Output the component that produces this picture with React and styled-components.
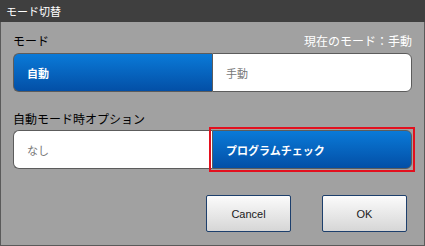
import React from 'react';
import styled, { createGlobalStyle } from 'styled-components';

const GlobalStyle = createGlobalStyle`
  html, body {
    margin: 0;
    padding: 0;
    background: #a0a0a0;
  }
  * {
    box-sizing: border-box;
  }
`;

const jp = `"Noto Sans CJK JP", "Liberation Sans", sans-serif`;

const Window = styled.div`
  width: 425px;
  height: 246px;
  display: flex;
  flex-direction: column;
  background: #a1a1a1;
  border: 1px solid #5a5a5a;
  border-top: none;
  font-family: ${jp};
`;

const TitleBar = styled.div`
  height: 22px;
  flex-shrink: 0;
  background: #3f3f3f;
  color: #fff;
  font-size: 11px;
  line-height: 22px;
  padding-left: 6px;
  margin: 0 -1px;
`;

const Content = styled.div`
  display: flex;
  flex-direction: column;
  padding: 0 12px;
`;

const LabelRow = styled.div`
  display: flex;
  justify-content: space-between;
  align-items: center;
  height: 16px;
  margin-top: ${(p) => p.$top}px;
  font-size: 12px;
  color: #000;
`;

const Current = styled.span`
  color: #fff;
`;

const Segmented = styled.div`
  display: grid;
  grid-template-columns: 199px 1fr;
  height: 39px;
  margin-top: ${(p) => p.$top}px;
`;

const Segment = styled.div`
  position: relative;
  display: flex;
  align-items: center;
  padding-left: 13px;
  font-size: 11px;
  border: 1px solid #5c5c5c;
  border-radius: ${(p) => (p.$first ? '6px 0 0 6px' : '0 6px 6px 0')};
  ${(p) => (p.$first ? 'border-right: none;' : '')}
  background: ${(p) =>
    p.$active ? 'linear-gradient(#0a7ad8, #034fa6)' : '#fff'};
  color: ${(p) => (p.$active ? '#fff' : '#777')};
  font-weight: ${(p) => (p.$active ? 700 : 400)};

  /* focus frame: square red rectangle sitting just outside the button */
  ${(p) =>
    p.$focus &&
    `
    &::after {
      content: '';
      position: absolute;
      inset: -4px;
      border: 2px solid #e3101e;
      pointer-events: none;
    }
  `}
`;

const ButtonRow = styled.div`
  display: flex;
  justify-content: flex-end;
  gap: 31px;
  margin-top: 26px;
  padding-right: 5px;
`;

const Button = styled.button`
  width: 85px;
  height: 37px;
  border: 1px solid #1d3f6c;
  border-radius: 2px;
  background: linear-gradient(#fbfbfb, #d6d6d6);
  font-family: "Liberation Sans", sans-serif;
  font-size: 11px;
  color: #1a1a1a;
  padding: 0;
`;

export default function App() {
  return (
    <>
      <GlobalStyle />
      <Window>
        <TitleBar>モード切替</TitleBar>
        <Content>
          <LabelRow $top={10}>
            <span>モード</span>
            <Current>現在のモード：手動</Current>
          </LabelRow>
          <Segmented $top={5}>
            <Segment $first $active>自動</Segment>
            <Segment>手動</Segment>
          </Segmented>
          <LabelRow $top={18}>
            <span>自動モード時オプション</span>
          </LabelRow>
          <Segmented $top={4}>
            <Segment $first>なし</Segment>
            <Segment $active $focus>プログラムチェック</Segment>
          </Segmented>
          <ButtonRow>
            <Button>Cancel</Button>
            <Button>OK</Button>
          </ButtonRow>
        </Content>
      </Window>
    </>
  );
}
